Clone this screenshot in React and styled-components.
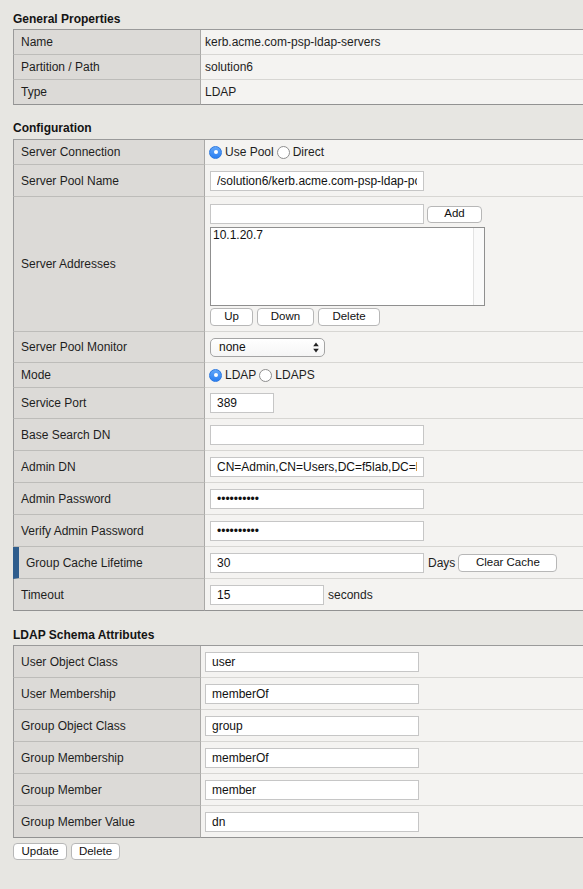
import React from 'react';
import styled, { createGlobalStyle, css } from 'styled-components';

const GlobalStyle = createGlobalStyle`
  html, body { margin: 0; padding: 0; overflow: hidden; background: #e7e6e2; }
  body {
    font-family: "Liberation Sans", Arial, Helvetica, sans-serif;
    font-size: 12px;
    color: #1e1e1e;
  }
  * { box-sizing: border-box; }
`;

const Page = styled.div`
  width: 583px;
  height: 889px;
  padding-left: 13px;
  overflow: hidden;
`;

const SectionTitle = styled.h3`
  margin: 0;
  padding: ${(p) => p.$top}px 0 ${(p) => p.$bottom}px;
  font-size: 12px;
  line-height: 15px;
  font-weight: bold;
  color: #141414;
`;

const Table = styled.div`
  width: 620px;
  border-top: 1px solid #9a9a9a;
`;

const Row = styled.div`
  display: grid;
  grid-template-columns: ${(p) => p.$label}px 1fr;
  height: ${(p) => p.$h}px;
  &:last-child > * {
    border-bottom-color: #929292;
  }
`;

const Label = styled.div`
  display: flex;
  align-items: center;
  background: #dcdad7;
  border-left: ${(p) => (p.$mark ? '6px solid #2f5d8d' : '1px solid #9a9a9a')};
  border-right: 1px solid #aaa9a7;
  border-bottom: 1px solid #bdbcb9;
  padding-left: 7px;
  white-space: nowrap;
`;

const Value = styled.div`
  display: flex;
  align-items: center;
  background: #f4f3f1;
  border-bottom: 1px solid #d7d6d3;
  padding-left: ${(p) => p.$pad}px;
  white-space: nowrap;
`;

const StackValue = styled(Value)`
  flex-direction: column;
  align-items: flex-start;
  justify-content: flex-start;
  padding-top: 7px;
`;

const TextInput = styled.input`
  width: ${(p) => p.$w}px;
  height: 20px;
  margin: 0;
  padding: 0 6px;
  border: 1px solid #c6c6c6;
  border-radius: 0;
  background: #fff;
  font-family: inherit;
  font-size: 12px;
  color: #111;
  outline: none;
`;

const Button = styled.button`
  width: ${(p) => p.$w}px;
  height: ${(p) => p.$h || 18}px;
  margin: 0;
  padding: 0;
  border: 1px solid #b7b7b7;
  border-radius: 4px;
  background: #fff;
  font-family: inherit;
  font-size: 11.5px;
  line-height: 1;
  color: #111;
  flex: none;
`;

const InlineGroup = styled.div`
  display: flex;
  align-items: center;
  gap: ${(p) => p.$gap}px;
  margin-top: ${(p) => p.$mt || 0}px;
`;

const Suffix = styled.span`
  margin-left: ${(p) => p.$ml}px;
  margin-right: ${(p) => p.$mr || 0}px;
  color: #1e1e1e;
`;

const RadioOption = styled.label`
  display: inline-flex;
  align-items: center;
  gap: 3px;
  margin-right: 3px;
  &:first-child { margin-left: -1px; }
`;

const RadioDot = styled.span`
  position: relative;
  display: inline-block;
  flex: none;
  width: 13px;
  height: 13px;
  border-radius: 50%;
  ${(p) =>
    p.$on
      ? css`
          background: linear-gradient(#62a6f8, #2a7ff2);
          border: 1px solid #2b78e0;
          &::after {
            content: '';
            position: absolute;
            left: 50%;
            top: 50%;
            width: 4px;
            height: 4px;
            border-radius: 50%;
            background: #fff;
            transform: translate(-50%, -50%);
          }
        `
      : css`
          background: #fff;
          border: 1px solid #8e8e8e;
        `}
`;

const SelectWrap = styled.div`
  position: relative;
  width: 115px;
  height: 19px;
`;

const Select = styled.select`
  appearance: none;
  -webkit-appearance: none;
  width: 100%;
  height: 100%;
  margin: 0;
  padding: 0 0 0 8px;
  border: 1px solid #a4a4a4;
  border-radius: 5px;
  background: linear-gradient(#ffffff, #f5f5f5);
  font-family: inherit;
  font-size: 12px;
  color: #111;
  outline: none;
`;

const SelectArrows = styled.svg`
  position: absolute;
  right: 6px;
  top: 4px;
  pointer-events: none;
`;

const ListBox = styled.div`
  display: flex;
  width: 275px;
  height: 79px;
  margin-top: 3px;
  border: 1px solid #8f8f8f;
  background: #fff;
`;

const ListItems = styled.div`
  flex: 1;
  padding: 0 2px;
  font-size: 12px;
  line-height: 14px;
  color: #111;
`;

const ScrollTrack = styled.div`
  width: 11px;
  border-left: 1px solid #e3e3e3;
  background: #fafafa;
`;

const Footer = styled.div`
  display: flex;
  gap: 4px;
  margin-top: 5px;
`;

function Radio({ on, children }) {
  return (
    <RadioOption>
      <RadioDot $on={on} />
      {children}
    </RadioOption>
  );
}

const G = 188;
const C = 192;

export default function App() {
  return (
    <Page>
      <GlobalStyle />
      <SectionTitle $top={12} $bottom={2}>General Properties</SectionTitle>
      <Table>
        <Row $label={G} $h={25}>
          <Label>Name</Label>
          <Value $pad={4}>kerb.acme.com-psp-ldap-servers</Value>
        </Row>
        <Row $label={G} $h={25}>
          <Label>Partition / Path</Label>
          <Value $pad={4}>solution6</Value>
        </Row>
        <Row $label={G} $h={25}>
          <Label>Type</Label>
          <Value $pad={4}>LDAP</Value>
        </Row>
      </Table>

      <SectionTitle $top={16} $bottom={3}>Configuration</SectionTitle>
      <Table>
        <Row $label={C} $h={25}>
          <Label>Server Connection</Label>
          <Value $pad={5}>
            <Radio on>Use Pool</Radio>
            <Radio>Direct</Radio>
          </Value>
        </Row>
        <Row $label={C} $h={32}>
          <Label>Server Pool Name</Label>
          <Value $pad={5}>
            <TextInput $w={214} readOnly value="/solution6/kerb.acme.com-psp-ldap-pool" />
          </Value>
        </Row>
        <Row $label={C} $h={135}>
          <Label>Server Addresses</Label>
          <StackValue $pad={5}>
            <InlineGroup $gap={3}>
              <TextInput $w={214} readOnly value="" />
              <Button $w={55} $h={17}>Add</Button>
            </InlineGroup>
            <ListBox>
              <ListItems>10.1.20.7</ListItems>
              <ScrollTrack />
            </ListBox>
            <InlineGroup $gap={4} $mt={2}>
              <Button $w={43}>Up</Button>
              <Button $w={57}>Down</Button>
              <Button $w={62}>Delete</Button>
            </InlineGroup>
          </StackValue>
        </Row>
        <Row $label={C} $h={31}>
          <Label>Server Pool Monitor</Label>
          <Value $pad={5}>
            <SelectWrap>
              <Select defaultValue="none">
                <option value="none">none</option>
              </Select>
              <SelectArrows width="6" height="11" viewBox="0 0 6 11">
                <path d="M3 0.5 L5.8 4.2 L0.2 4.2 Z" fill="#222" />
                <path d="M3 10.5 L5.8 6.8 L0.2 6.8 Z" fill="#222" />
              </SelectArrows>
            </SelectWrap>
          </Value>
        </Row>
        <Row $label={C} $h={25}>
          <Label>Mode</Label>
          <Value $pad={5}>
            <Radio on>LDAP</Radio>
            <Radio>LDAPS</Radio>
          </Value>
        </Row>
        <Row $label={C} $h={31}>
          <Label>Service Port</Label>
          <Value $pad={5}>
            <TextInput $w={64} readOnly value="389" />
          </Value>
        </Row>
        <Row $label={C} $h={32}>
          <Label>Base Search DN</Label>
          <Value $pad={5}>
            <TextInput $w={214} readOnly value="" />
          </Value>
        </Row>
        <Row $label={C} $h={32}>
          <Label>Admin DN</Label>
          <Value $pad={5}>
            <TextInput $w={214} readOnly value="CN=Admin,CN=Users,DC=f5lab,DC=local" />
          </Value>
        </Row>
        <Row $label={C} $h={32}>
          <Label>Admin Password</Label>
          <Value $pad={5}>
            <TextInput $w={214} type="password" readOnly value="xxxxxxxxxx" />
          </Value>
        </Row>
        <Row $label={C} $h={32}>
          <Label>Verify Admin Password</Label>
          <Value $pad={5}>
            <TextInput $w={214} type="password" readOnly value="xxxxxxxxxx" />
          </Value>
        </Row>
        <Row $label={C} $h={32}>
          <Label $mark>Group Cache Lifetime</Label>
          <Value $pad={5}>
            <TextInput $w={214} readOnly value="30" />
            <Suffix $ml={4} $mr={3}>Days</Suffix>
            <Button $w={99}>Clear Cache</Button>
          </Value>
        </Row>
        <Row $label={C} $h={32}>
          <Label>Timeout</Label>
          <Value $pad={5}>
            <TextInput $w={114} readOnly value="15" />
            <Suffix $ml={4}>seconds</Suffix>
          </Value>
        </Row>
      </Table>

      <SectionTitle $top={17} $bottom={2}>LDAP Schema Attributes</SectionTitle>
      <Table>
        {[
          ['User Object Class', 'user'],
          ['User Membership', 'memberOf'],
          ['Group Object Class', 'group'],
          ['Group Membership', 'memberOf'],
          ['Group Member', 'member'],
          ['Group Member Value', 'dn'],
        ].map(([label, val]) => (
          <Row key={label} $label={G} $h={32}>
            <Label>{label}</Label>
            <Value $pad={4}>
              <TextInput $w={214} readOnly value={val} />
            </Value>
          </Row>
        ))}
      </Table>
      <Footer>
        <Button $w={54} $h={17}>Update</Button>
        <Button $w={49} $h={17}>Delete</Button>
      </Footer>
    </Page>
  );
}
